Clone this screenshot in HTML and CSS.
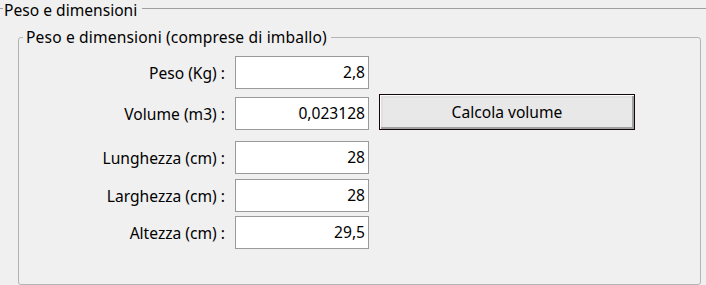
FILE: index.html
```html
<!DOCTYPE html>
<html lang="it">
<head>
<meta charset="utf-8">
<link rel="stylesheet" href="styles.css">
</head>
<body>
<div class="outer">
  <div class="outer-title">
    <span class="tick"></span>
    <span class="outer-text">Peso e dimensioni</span>
    <span class="rule"></span>
  </div>
  <fieldset class="group">
    <legend class="group-title">Peso e dimensioni (comprese di imballo)</legend>
    <div class="rows">
      <div class="row">
        <label class="lbl">Peso (Kg) :</label>
        <div class="field">2,8</div>
      </div>
      <div class="row row-2">
        <label class="lbl">Volume (m3) :</label>
        <div class="field">0,023128</div>
        <button class="btn">Calcola volume</button>
      </div>
      <div class="row row-3">
        <label class="lbl">Lunghezza (cm) :</label>
        <div class="field">28</div>
      </div>
      <div class="row row-4">
        <label class="lbl">Larghezza (cm) :</label>
        <div class="field">28</div>
      </div>
      <div class="row row-5">
        <label class="lbl">Altezza (cm) :</label>
        <div class="field">29,5</div>
      </div>
    </div>
  </fieldset>
</div>
</body>
</html>
```
FILE: styles.css
```css
html, body {
  margin: 0;
  padding: 0;
  background: #f0f0f0;
  width: 706px;
  height: 285px;
  overflow: hidden;
}
body {
  font-family: "Noto Sans", "Open Sans", sans-serif;
  font-size: 15.6px;
  color: #000;
}
.outer-title {
  display: flex;
  align-items: flex-start;
  height: 19px;
}
.tick {
  width: 3px;
  height: 1px;
  background: #a0a0a0;
  margin-top: 8px;
}
.outer-text {
  padding: 0 5px 0 1px;
  line-height: 20px;
}
.rule {
  flex: 1;
  height: 1px;
  background: #a0a0a0;
  margin-top: 8px;
}
.group {
  margin: 9px 5px 0 18px;
  padding: 0;
  border: 1px solid #b4b4b4;
  border-radius: 3px;
  height: 257px;
  box-sizing: border-box;
}
.group-title {
  padding: 0 4px 0 3px;
  margin-left: 4px;
  line-height: 18px;
  letter-spacing: 0.15px;
}
.rows {
  display: flex;
  flex-direction: column;
  padding-top: 10px;
}
.row {
  display: flex;
  align-items: center;
  height: 33px;
}
.row-2 { margin-top: 8px; }
.row-3 { margin-top: 11px; }
.row-4 { margin-top: 5px; }
.row-5 { margin-top: 4px; }
.lbl {
  width: 206px;
  text-align: right;
  white-space: nowrap;
}
.field {
  margin-left: 10px;
  width: 134px;
  height: 33px;
  box-sizing: border-box;
  border: 1px solid #9a9a9a;
  background: #fff;
  text-align: right;
  padding: 0 3px;
  line-height: 30px;
}
.btn {
  align-self: flex-end;
  margin-left: 10px;
  width: 256px;
  height: 36px;
  box-sizing: border-box;
  border: 1px solid #140606;
  background: #e8e8e8;
  box-shadow: inset 1px 1px 0 #fdfdfd, inset -2px -2px 0 #a0a0a0, inset 3px 3px 0 #e0e0e0;
  font: inherit;
  color: #000;
  padding: 0;
}
```
